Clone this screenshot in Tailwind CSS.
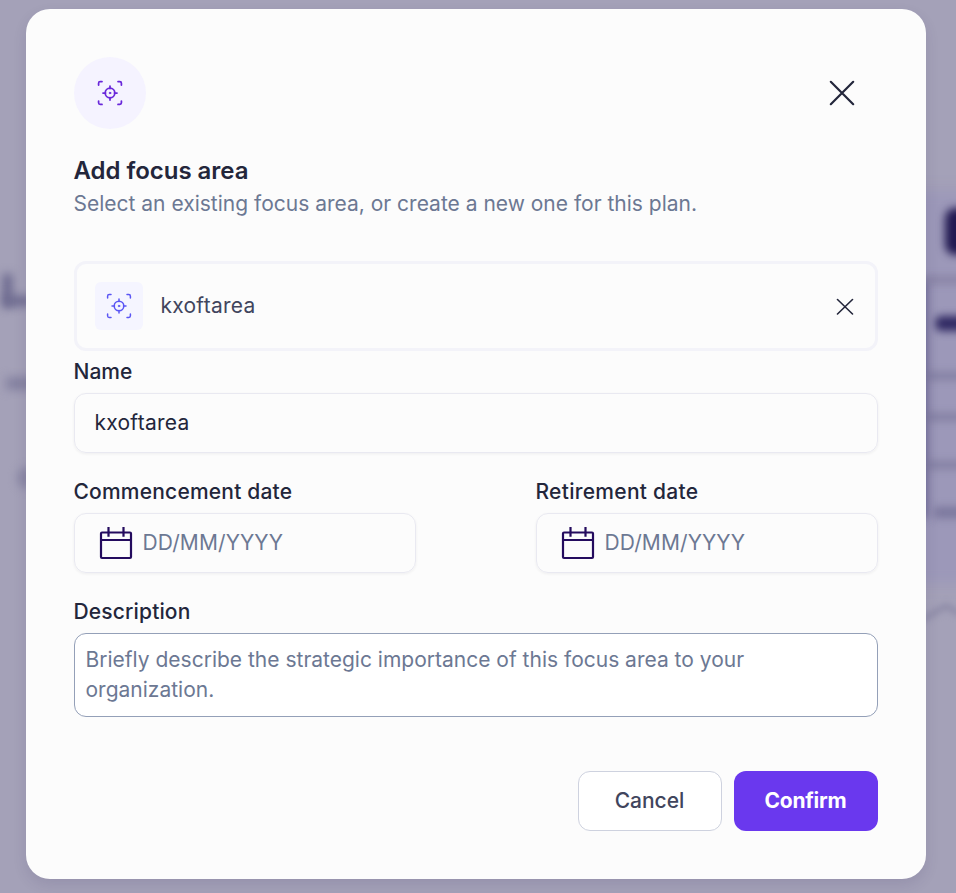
<!DOCTYPE html>
<html lang="en">
<head>
<meta charset="utf-8">
<title>Add focus area</title>
<script src="https://cdn.jsdelivr.net/npm/@tailwindcss/browser@4"></script>
</head>
<body class="relative h-[893px] w-[956px] overflow-hidden bg-[#a4a1b8] font-['Inter',sans-serif] text-[21px] leading-[30px] text-[#23263b]">
<svg width="0" height="0" class="absolute">
  <symbol id="focus" viewBox="0 0 24 24" fill="none" stroke="currentColor" stroke-linecap="round" stroke-linejoin="round" overflow="visible">
    <path d="M.6 4V2.200Q.6.6 2.200 .6H4M20 .6H21.800Q23.400 .6 23.400 2.200V4M23.400 20V21.800Q23.400 23.400 21.800 23.400H20M4 23.400H2.200Q.6 23.400 .6 21.800V20"/>
    <circle cx="12" cy="12" r="4.800"/>
    <path d="M12 5v2.500M12 16.500v2.500M5 12h2.500M16.500 12h2.500"/>
    <circle cx="12" cy="12" r=".8" fill="currentColor" stroke-width=".8"/>
  </symbol>
  <symbol id="calendar" viewBox="0 0 34 34" fill="none" stroke="currentColor" stroke-width="2.200" stroke-linejoin="round">
    <rect x="2" y="6.500" width="30" height="25.500" rx="1"/>
    <path d="M2 14H32M9.500 1V10.700M24.500 1V10.700"/>
  </symbol>
</svg>

<!-- Blurred page behind the dialog -->
<div class="absolute inset-0 overflow-hidden" aria-hidden="true">
  <div class="absolute left-[900px] top-[190px] h-[394px] w-[76px] bg-[#9c98b9] blur-[7px]"></div>
  <div class="absolute left-[3px] top-[274px] h-[33px] w-[9px] bg-[#66638a] blur-[5px]"></div>
  <div class="absolute left-[4px] top-[296px] h-[10px] w-[28px] bg-[#6d6a8f] blur-[5px]"></div>
  <div class="absolute left-[6px] top-[377px] h-[13px] w-[30px] bg-[#8481a0] blur-[5px]"></div>
  <div class="absolute left-[17px] top-[467px] h-[22px] w-[20px] rounded-full bg-[#8b88a5] blur-[4px]"></div>
  <div class="absolute left-[945px] top-[208px] h-[47px] w-[40px] rounded-[10px] bg-[#211951] blur-[4px]"></div>
  <div class="absolute left-[935px] top-[316px] h-[15px] w-[40px] rounded-[6px] bg-[#2f2862] blur-[4px]"></div>
  <div class="absolute left-[916px] top-[280px] h-[238px] w-[12px] bg-[#726c98] blur-[4px]"></div>
  <div class="absolute left-[920px] top-[277px] h-[6px] w-[60px] bg-[#837e9f] blur-[4px]"></div>
  <div class="absolute left-[920px] top-[373px] h-[6px] w-[60px] bg-[#7c789c] blur-[4px]"></div>
  <div class="absolute left-[920px] top-[414px] h-[6px] w-[60px] bg-[#7c789c] blur-[4px]"></div>
  <div class="absolute left-[920px] top-[462px] h-[6px] w-[60px] bg-[#7c789c] blur-[4px]"></div>
  <div class="absolute left-[934px] top-[507px] h-[11px] w-[50px] bg-[#7a769c] blur-[4px]"></div>
  <svg class="absolute left-[916px] top-[590px] blur-[3px]" width="50" height="36" fill="none" stroke="#8f8ca8" stroke-width="6"><path d="M4 31L30 16L44 24"/></svg>
</div>

<main class="relative ml-[26px] mt-[9px] flex h-[870px] w-[900px] flex-col rounded-[24px] bg-[#fcfcfc] px-12 pt-12 shadow-[0_6px_14px_rgba(50,40,90,0.12)]">
  <header class="flex items-center justify-between">
    <div class="flex size-[72px] items-center justify-center rounded-full bg-[#f5f3ff] text-[#6927da]">
      <svg class="size-[24px] overflow-visible" stroke-width="1.750"><use href="#focus"/></svg>
    </div>
    <button class="mr-6" aria-label="Close"><svg width="24" height="24" viewBox="0 0 24 24" class="overflow-visible" stroke="#23263b" stroke-width="2.200" stroke-linecap="round"><path d="M.8.8L23.200 23.200M23.200 .8L.8 23.200"/></svg></button>
  </header>
  <h1 class="-ml-[0.5px] mt-6 text-[24px] font-semibold leading-[36px] tracking-[-0.03px]">Add focus area</h1>
  <p class="-ml-[0.5px] text-[#6c7893]">Select an existing focus area, or create a new one for this plan.</p>

  <div class="mt-[42px] flex h-[90px] items-center rounded-[12px] border-[3px] border-[#f3f3f9] pl-[18px] pr-[21px]">
    <div class="flex size-[48px] items-center justify-center rounded-[6px] bg-[#f5f5ff] text-[#5a55f4]">
      <svg class="size-[24px] overflow-visible" stroke-width="1.500"><use href="#focus"/></svg>
    </div>
    <span class="ml-[17.5px] tracking-[0.25px] text-[#41455d]">kxoftarea</span>
    <svg class="ml-auto" width="18" height="18" viewBox="0 0 18 18" stroke="#23263b" stroke-width="1.600" stroke-linecap="round"><path d="M1.500 2.500L16.500 17M16.500 2.500L1.500 17"/></svg>
  </div>

  <label class="-ml-[0.5px] mt-[6px] font-medium">Name</label>
  <div class="mt-[6px] flex h-[60px] items-center rounded-[12px] border border-[#e9e9f1] px-[19.5px] tracking-[0.25px] shadow-[0_1px_3px_rgba(16,24,40,0.06)]">kxoftarea</div>

  <div class="mt-6 flex justify-between">
    <div class="w-[342px]">
      <label class="-ml-[0.5px] block font-medium tracking-[0.2px]">Commencement date</label>
      <div class="mt-[6px] flex h-[60px] items-center rounded-[12px] border border-[#e9e9f1] pl-6 text-[#6c7893] shadow-[0_1px_3px_rgba(16,24,40,0.06)]">
        <svg class="size-[34px] text-[#240b5e]"><use href="#calendar"/></svg><span class="ml-[9.5px] tracking-[0.1px]">DD/MM/YYYY</span>
      </div>
    </div>
    <div class="w-[342px]">
      <label class="-ml-[0.5px] block font-medium tracking-[0.28px]">Retirement date</label>
      <div class="mt-[6px] flex h-[60px] items-center rounded-[12px] border border-[#e9e9f1] pl-6 text-[#6c7893] shadow-[0_1px_3px_rgba(16,24,40,0.06)]">
        <svg class="size-[34px] text-[#240b5e]"><use href="#calendar"/></svg><span class="ml-[9.5px] tracking-[0.1px]">DD/MM/YYYY</span>
      </div>
    </div>
  </div>

  <label class="-ml-[0.5px] mt-6 font-medium tracking-[0.15px]">Description</label>
  <div class="mt-[6px] h-[84px] rounded-[12px] border border-[#94a0b8] bg-white px-[10.5px] pt-[11px] text-[#6c7893]">Briefly describe the strategic importance of this focus area to your organization.</div>

  <footer class="mt-[54px] flex justify-end gap-3">
    <button class="h-[60px] w-[144px] rounded-[12px] border border-[#ced2df] bg-white pr-px font-medium text-[#41455d]">Cancel</button>
    <button class="h-[60px] w-[144px] rounded-[12px] bg-[#6a38ee] pr-px font-bold tracking-[-0.25px] text-white">Confirm</button>
  </footer>
</main>
</body>
</html>
